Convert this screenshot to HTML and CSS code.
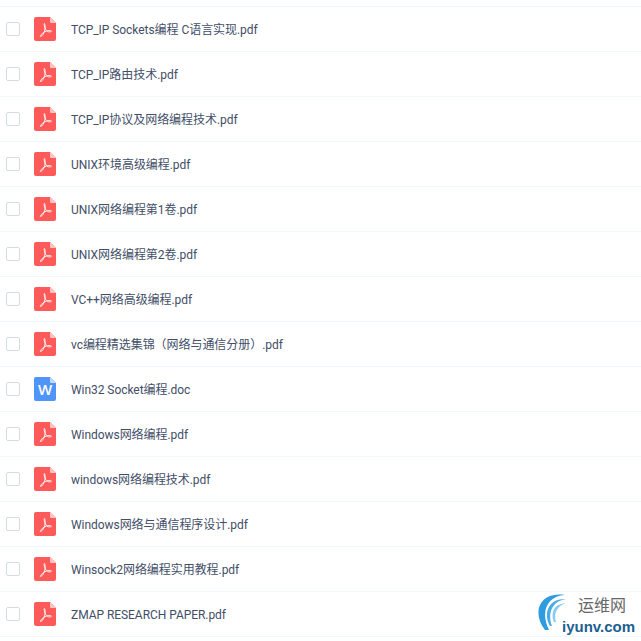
FILE: index.html
```html
<!DOCTYPE html>
<html lang="zh-CN">
<head>
  <meta charset="UTF-8" />
  <title>文件列表</title>
  <meta name="viewport" content="width=device-width, initial-scale=1">
  <link rel="stylesheet" href="styles.css">
</head>
<body>
  <svg class="defs" width="0" height="0" aria-hidden="true">
    <symbol id="pdf" viewBox="0 0 22 24">
      <path d="M2 0H16L22 6V22a2 2 0 0 1-2 2H2a2 2 0 0 1-2-2V2a2 2 0 0 1 2-2Z" fill="#ff5a5a"/>
      <path d="M16 0L22 6H17a1 1 0 0 1-1-1Z" fill="#ffc4c4"/>
      <path d="M10.300 6.500C9.800 7 10.500 10 11.200 11.500C12 13.200 13.500 14.600 14.500 14.800C15.800 15 17.500 14.800 17.500 14.200C17.500 13.500 15.500 13.400 14 13.700C12 14.100 9.800 15 8.600 16.200C7.500 17.300 5.900 19.200 6.400 19.500C7 19.900 8.500 18.300 9.400 16.800C10.400 15.100 11.100 13 11.200 11C11.300 9 10.800 6 10.300 6.500Z" fill="none" stroke="#fff" stroke-width=".9"/>
    </symbol>
  </svg>

  <ul class="file-list">
    <li class="file-row"><span class="check"></span><svg class="file-icon"><use href="#pdf"/></svg><span class="file-name">TCP_IP Sockets编程 C语言实现.pdf</span></li>
    <li class="file-row"><span class="check"></span><svg class="file-icon"><use href="#pdf"/></svg><span class="file-name">TCP_IP路由技术.pdf</span></li>
    <li class="file-row"><span class="check"></span><svg class="file-icon"><use href="#pdf"/></svg><span class="file-name">TCP_IP协议及网络编程技术.pdf</span></li>
    <li class="file-row"><span class="check"></span><svg class="file-icon"><use href="#pdf"/></svg><span class="file-name">UNIX环境高级编程.pdf</span></li>
    <li class="file-row"><span class="check"></span><svg class="file-icon"><use href="#pdf"/></svg><span class="file-name">UNIX网络编程第1卷.pdf</span></li>
    <li class="file-row"><span class="check"></span><svg class="file-icon"><use href="#pdf"/></svg><span class="file-name">UNIX网络编程第2卷.pdf</span></li>
    <li class="file-row"><span class="check"></span><svg class="file-icon"><use href="#pdf"/></svg><span class="file-name">VC++网络高级编程.pdf</span></li>
    <li class="file-row"><span class="check"></span><svg class="file-icon"><use href="#pdf"/></svg><span class="file-name">vc编程精选集锦（网络与通信分册）.pdf</span></li>
    <li class="file-row"><span class="check"></span>
      <svg class="file-icon" viewBox="0 0 22 24">
        <path d="M2 0H16L22 6V22a2 2 0 0 1-2 2H2a2 2 0 0 1-2-2V2a2 2 0 0 1 2-2Z" fill="#4f94f9"/>
        <path d="M16 0L22 6H17a1 1 0 0 1-1-1Z" fill="#c0d9fd"/>
        <text x="11" y="18" text-anchor="middle" class="doc-letter">W</text>
      </svg><span class="file-name">Win32 Socket编程.doc</span></li>
    <li class="file-row"><span class="check"></span><svg class="file-icon"><use href="#pdf"/></svg><span class="file-name">Windows网络编程.pdf</span></li>
    <li class="file-row"><span class="check"></span><svg class="file-icon"><use href="#pdf"/></svg><span class="file-name">windows网络编程技术.pdf</span></li>
    <li class="file-row"><span class="check"></span><svg class="file-icon"><use href="#pdf"/></svg><span class="file-name">Windows网络与通信程序设计.pdf</span></li>
    <li class="file-row"><span class="check"></span><svg class="file-icon"><use href="#pdf"/></svg><span class="file-name">Winsock2网络编程实用教程.pdf</span></li>
    <li class="file-row"><span class="check"></span><svg class="file-icon"><use href="#pdf"/></svg><span class="file-name">ZMAP RESEARCH PAPER.pdf</span></li>
  </ul>

  <div class="watermark">
    <svg class="wm-swirl" viewBox="0 0 50 50">
      <path d="M10 40C-3 24 3 1 30 5C12 6 5 22 14 40Z" fill="#2f9be0"/>
      <path d="M15 36C8 24 13 8 31 9C18 11 12 22 17 36Z" fill="#4aace6"/>
      <path d="M19 32C15 22 20 13 31 13.500C23 15 18 23 21 32Z" fill="#86ccf0"/>
    </svg>
    <span class="wm-cn">运维网</span>
    <span class="wm-en">iyunv.com</span>
  </div>
</body>
</html>
```

FILE: styles.css
```css
html, body { margin: 0; padding: 0; background: #fff; height: 641px; overflow: hidden; }
body { position: relative; font-family: Roboto, "Noto Sans CJK SC", sans-serif; }
.defs { display: block; height: 0; }

.file-list { list-style: none; margin: 6px 0 0; padding: 0; border-top: 1px solid #f2f6fd; }
.file-row { display: flex; align-items: center; height: 44px; border-bottom: 1px solid #f2f6fd; padding-left: 6px; }
.check { width: 12px; height: 12px; border: 1px solid #d5dbe5; border-radius: 2px; flex: none; }
.file-icon { width: 22px; height: 24px; margin-left: 14px; flex: none; }
.file-name { margin: 2px 0 0 15px; font-size: 12px; line-height: 16px; letter-spacing: -.05px; color: #424e67; white-space: nowrap; }
.doc-letter { font-family: "Open Sans", sans-serif; font-size: 15px; font-weight: 600; fill: #fff; }

/* 右下角水印 */
.watermark { position: absolute; left: 535px; top: 590px; width: 106px; height: 48px; }
.wm-swirl { position: absolute; left: 0; top: 0; width: 50px; height: 50px; }
.wm-cn { position: absolute; left: 43px; top: 6px; font-size: 16px; color: #666; line-height: 20px; }
.wm-en { position: absolute; left: 27px; top: 27px; font-family: "Liberation Sans", sans-serif; font-size: 15px; font-weight: 700; color: #1d5f8f; line-height: 20px; }
```
